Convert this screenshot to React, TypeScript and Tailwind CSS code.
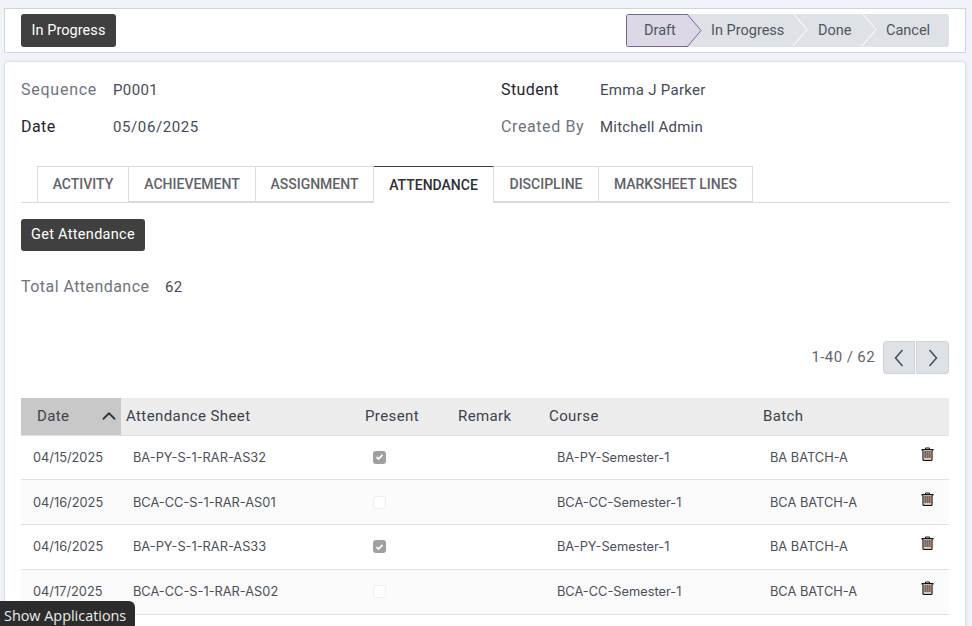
import React from "react";
import { ChevronUp } from "lucide-react";

const rows = [
  { d: "04/15/2025", s: "BA-PY-S-1-RAR-AS32", p: true, c: "BA-PY-Semester-1", b: "BA BATCH-A" },
  { d: "04/16/2025", s: "BCA-CC-S-1-RAR-AS01", p: false, c: "BCA-CC-Semester-1", b: "BCA BATCH-A" },
  { d: "04/16/2025", s: "BA-PY-S-1-RAR-AS33", p: true, c: "BA-PY-Semester-1", b: "BA BATCH-A" },
  { d: "04/17/2025", s: "BCA-CC-S-1-RAR-AS02", p: false, c: "BCA-CC-Semester-1", b: "BCA BATCH-A" },
];

function Trash() {
  return (
    <svg width="13" height="14" viewBox="0 0 13 14" className="block">
      <path d="M4.5 2V1h4v1" fill="none" stroke="#111" strokeWidth="1" />
      <rect x="0.5" y="2" width="12" height="1.6" fill="#111" />
      <path d="M2 3.5V12.4c0 .6.4 1 1 1h7c.6 0 1-.4 1-1V3.5" fill="#fff" stroke="#111" strokeWidth="1.2" />
      <path d="M3 4h7v7.4H3z" fill="#c4763c" />
      <path d="M4.5 4v7M6.5 4v7M8.5 4v7" stroke="#3f6fa8" strokeWidth="0.9" />
    </svg>
  );
}

function Arrow({ fill, stroke }: { fill: string; stroke: string }) {
  return (
    <svg width="15" height="33" viewBox="0 0 15 33" className="absolute -right-[14px] -top-px z-10">
      <path d="M0 0L14 16.5L0 33" fill={fill} stroke={stroke} strokeWidth="1" />
    </svg>
  );
}

export default function App() {
  return (
    <div className="relative h-[626px] w-[972px] overflow-hidden bg-[#f0f3f9] pl-1 pr-[6px] pt-2 font-['Roboto',sans-serif] text-[15px] tracking-[0.4px] text-[#444b5a]">
      <div className="flex h-[45px] items-center justify-between border border-[#ced4e2] bg-white pl-4 pr-4">
        <button className="h-[33px] w-[95px] rounded-[3px] bg-[#404040] text-center text-[14.5px] tracking-[0.05px] text-white">In Progress</button>
        <div className="flex h-[33px] items-stretch overflow-hidden rounded-[3px] bg-[#dee1e6] text-[14.5px] tracking-normal text-[#4f5561]">
          <div className="relative flex w-[62px] items-center border border-r-0 border-[#7a63a5] bg-[#dcd8e6] pl-[17px]">
            Draft
            <Arrow fill="#dcd8e6" stroke="#7a63a5" />
          </div>
          <div className="relative flex w-[106px] items-center pl-[23px]">
            In Progress
            <Arrow fill="#dee1e6" stroke="#ffffff" />
          </div>
          <div className="relative flex w-[69px] items-center pl-[24px]">
            Done
            <Arrow fill="#dee1e6" stroke="#ffffff" />
          </div>
          <div className="flex w-[86px] items-center pl-[23px]">Cancel</div>
        </div>
      </div>

      <div className="mt-2 h-[600px] rounded-t-[4px] border border-[#dfe2ea] bg-white px-4 pt-[17px] shadow-[0_0_3px_rgba(0,0,0,0.1)]">
        <div className="grid grid-cols-[480px_1fr] gap-y-[15px]">
          <div className="flex h-[22px] items-center">
            <span className="w-[92px] text-[16px] tracking-[0.75px] text-[#6f7480]">Sequence</span>
            <span>P0001</span>
          </div>
          <div className="flex h-[22px] items-center">
            <span className="w-[99px] text-[16px] text-[#1f2430]">Student</span>
            <span className="tracking-[0.3px]">Emma J Parker</span>
          </div>
          <div className="flex h-[22px] items-center">
            <span className="w-[92px] text-[16px] text-[#1f2430]">Date</span>
            <span className="tracking-[0.6px]">05/06/2025</span>
          </div>
          <div className="flex h-[22px] items-center">
            <span className="w-[99px] text-[16px] tracking-[0.6px] text-[#6f7480]">Created By</span>
            <span className="tracking-[0.2px]">Mitchell Admin</span>
          </div>
        </div>

        <div className="mt-7 flex h-[37px] border-b border-[#d8dadd] pl-4 text-[14px] font-medium tracking-normal text-[#5f636b]">
          <div className="flex w-[92px] items-center justify-center border border-b-0 border-[#d8dadd]">ACTIVITY</div>
          <div className="flex w-[127px] items-center justify-center border-y border-r border-[#d8dadd]">ACHIEVEMENT</div>
          <div className="flex w-[118px] items-center justify-center border-y border-r border-[#d8dadd]">ASSIGNMENT</div>
          <div className="-mb-px flex w-[120px] items-center justify-center border-r border-t border-[#d8dadd] border-t-[#404040] bg-white text-[#2d3038]">ATTENDANCE</div>
          <div className="flex w-[105px] items-center justify-center border-y border-r border-[#d8dadd]">DISCIPLINE</div>
          <div className="flex w-[154px] items-center justify-center border-y border-r border-[#d8dadd]">MARKSHEET LINES</div>
        </div>

        <button className="mt-4 block h-[32px] w-[124px] rounded-[3px] bg-[#404040] text-center text-[14.5px] tracking-[0.3px] text-white">Get Attendance</button>

        <div className="mt-[25px] flex h-[22px] items-center">
          <span className="w-[144px] text-[16px] tracking-[0.45px] text-[#6f7480]">Total Attendance</span>
          <span>62</span>
        </div>

        <div className="mt-[43px] flex h-[33px] items-center justify-end">
          <span className="mr-2 text-[#5f6570]">1-40 / 62</span>
          <button className="flex h-[33px] w-8 items-center justify-center rounded-l-[3px] border border-[#cfd2d6] bg-[#dee1e6]">
            <svg width="10" height="18" viewBox="0 0 10 18"><path d="M8.5 1L1.5 9L8.5 17" fill="none" stroke="#444b5a" strokeWidth="1.5" /></svg>
          </button>
          <button className="ml-px flex h-[33px] w-[33px] items-center justify-center rounded-r-[3px] border border-[#cfd2d6] bg-[#dee1e6]">
            <svg width="10" height="18" viewBox="0 0 10 18"><path d="M1.5 1L8.5 9L1.5 17" fill="none" stroke="#444b5a" strokeWidth="1.5" /></svg>
          </button>
        </div>

        <table className="mt-6 w-[928px] table-fixed border-collapse">
          <colgroup>
            <col className="w-[100px]" />
            <col className="w-[239px]" />
            <col className="w-[93px]" />
            <col className="w-[91px]" />
            <col className="w-[214px]" />
            <col className="w-[150px]" />
            <col className="w-[41px]" />
          </colgroup>
          <thead>
            <tr className="h-[37px] border-b border-[#dcdee2] bg-[#ececed] text-left text-[#3d424d]">
              <th className="bg-[#c8c8c8] pl-4 font-normal">
                <div className="flex items-center justify-between pr-[1px]">
                  <span>Date</span>
                  <ChevronUp size={22} strokeWidth={2} className="text-[#33373f]" />
                </div>
              </th>
              <th className="pl-[5px] font-normal">Attendance Sheet</th>
              <th className="pl-[5px] font-normal">Present</th>
              <th className="pl-[5px] font-normal">Remark</th>
              <th className="pl-[5px] font-normal">Course</th>
              <th className="pl-[5px] font-normal">Batch</th>
              <th />
            </tr>
          </thead>
          <tbody className="font-['Inter',sans-serif] text-[12.8px] tracking-normal text-[#4a4f5a]">
            {rows.map((r, i) => (
              <tr key={i} className={"h-[44.8px] border-b border-[#dfe1e6] " + (i % 2 ? "bg-[#fbfbfb]" : "bg-white")}>
                <td className="pl-3">{r.d}</td>
                <td className="pl-3">{r.s}</td>
                <td className="pl-[13px]">
                  {r.p ? (
                    <span className="flex h-[13px] w-[13px] items-center justify-center rounded-[3px] bg-[#a0a0a0]">
                      <svg width="9" height="8" viewBox="0 0 9 8"><path d="M1.5 4.2L3.5 6L7.5 1.8" fill="none" stroke="#fff" strokeWidth="1.7" /></svg>
                    </span>
                  ) : (
                    <span className="block h-[13px] w-[13px] rounded-[3px] border border-[#eeeeef] bg-white" />
                  )}
                </td>
                <td />
                <td className="pl-[13px]">{r.c}</td>
                <td className="pl-3">{r.b}</td>
                <td className="pb-[7px] pl-[13px]"><Trash /></td>
              </tr>
            ))}
          </tbody>
        </table>
      </div>

      <div className="absolute bottom-0 left-0 flex h-[25px] w-[135px] items-center rounded-tr-[6px] bg-[#2c2c2c] pl-[4px] pt-1 font-['Open_Sans',sans-serif] text-[14.4px] tracking-normal text-[#ececec]">
        Show Applications
      </div>
    </div>
  );
}
